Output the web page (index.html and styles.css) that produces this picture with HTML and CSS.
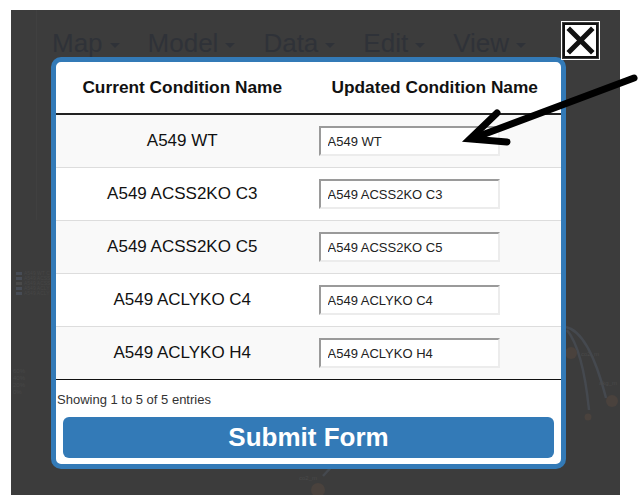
FILE: index.html
```html
<!DOCTYPE html>
<html lang="en">
<head>
<meta charset="utf-8">
<title>Update Condition Names</title>
<link rel="stylesheet" href="styles.css">
</head>
<body>
<div class="page">
  <div class="screen">
    <div class="sideline"></div>
    <nav class="menubar">
      <span class="menu">Map<i class="caret"></i></span>
      <span class="menu">Model<i class="caret"></i></span>
      <span class="menu">Data<i class="caret"></i></span>
      <span class="menu">Edit<i class="caret"></i></span>
      <span class="menu">View<i class="caret"></i></span>
    </nav>
    <div class="canvas">
      <div class="legend">
        <div class="lg"><b class="sw"></b>A549 WT C</div>
        <div class="lg"><b class="sw"></b>A549 ACSS</div>
        <div class="lg"><b class="sw light"></b>A549 ACSS</div>
        <div class="lg"><b class="sw"></b>A549 ACLY</div>
        <div class="lg"><b class="sw"></b>A549 ACLY</div>
      </div>
      <div class="axis">
        <div>60%</div><div>40%</div><div>20%</div><div>0%</div>
      </div>
      <svg class="graph" width="609" height="485" viewBox="0 0 609 485">
        <g stroke="#45494f" stroke-width="2.5" fill="none">
          <path d="M555 317 Q578 322 595 388"/>
          <path d="M556 320 Q572 340 578 400"/>
          <path d="M312 466 L325 452"/>
        </g>
        <g fill="#4a423d">
          <circle cx="560" cy="343" r="6"/>
          <circle cx="601" cy="391" r="6"/>
          <circle cx="577" cy="407" r="3.5"/>
          <circle cx="307" cy="480" r="7"/>
        </g>
        <g fill="#4a4a4a" font-family="Liberation Sans, Arial, sans-serif" font-size="6">
          <text x="570" y="346">co2_m</text>
          <text x="588" y="375">akg_m</text>
          <text x="288" y="470">co2_m</text>
        </g>
      </svg>
    </div>

    <div class="modal">
      <table class="conditions">
        <thead>
          <tr><th>Current Condition Name</th><th>Updated Condition Name</th></tr>
        </thead>
        <tbody>
          <tr><td class="cur">A549 WT</td><td class="upd"><input type="text" value="A549 WT"></td></tr>
          <tr><td class="cur">A549 ACSS2KO C3</td><td class="upd"><input type="text" value="A549 ACSS2KO C3"></td></tr>
          <tr><td class="cur">A549 ACSS2KO C5</td><td class="upd"><input type="text" value="A549 ACSS2KO C5"></td></tr>
          <tr><td class="cur">A549 ACLYKO C4</td><td class="upd"><input type="text" value="A549 ACLYKO C4"></td></tr>
          <tr><td class="cur">A549 ACLYKO H4</td><td class="upd"><input type="text" value="A549 ACLYKO H4"></td></tr>
        </tbody>
      </table>
      <div class="info">Showing 1 to 5 of 5 entries</div>
      <button class="submit" type="button">Submit Form</button>
    </div>

    <button class="close" type="button" aria-label="Close">
      <span class="close-inner">
        <svg width="31" height="31" viewBox="0 0 31 31">
          <path d="M5 5 L26 26 M26 5 L5 26" stroke="#111" stroke-width="5" stroke-linecap="square" fill="none"/>
        </svg>
      </span>
    </button>
  </div>

  <svg class="arrow" width="643" height="501" viewBox="0 0 643 501">
    <line x1="634" y1="78" x2="474" y2="138" stroke="#000" stroke-width="7" stroke-linecap="round"/>
    <polyline points="497,113 470,139 507,142" fill="none" stroke="#000" stroke-width="7" stroke-linecap="round" stroke-linejoin="miter"/>
  </svg>
</div>
</body>
</html>
```

FILE: styles.css
```css
html, body {
  margin: 0;
  padding: 0;
  background: #ffffff;
}

body {
  font-family: "Liberation Sans", Arial, sans-serif;
  color: #222;
}

.page {
  position: relative;
  width: 643px;
  height: 501px;
  padding: 10px 0 0 11px;
  box-sizing: border-box;
  overflow: hidden;
}

.screen {
  position: relative;
  width: 609px;
  height: 485px;
  background: #3c3c3c;
  overflow: hidden;
}

.sideline {
  position: absolute;
  left: 25px;
  top: 0;
  width: 1px;
  height: 210px;
  background: #404040;
}

/* faint menu behind the overlay */
.menubar {
  display: flex;
  align-items: center;
  gap: 28px;
  height: 66px;
  padding-left: 41px;
  font-size: 26px;
  color: #2f3238;
}

.menu {
  display: flex;
  align-items: center;
}

.caret {
  display: inline-block;
  margin-left: 7px;
  margin-top: 4px;
  width: 0;
  height: 0;
  border-top: 5px solid #2f3238;
  border-left: 5px solid transparent;
  border-right: 5px solid transparent;
}

/* faint diagram behind the overlay */
.canvas {
  position: absolute;
  inset: 0;
}

.graph {
  position: absolute;
  left: 0;
  top: 0;
}

.legend {
  position: absolute;
  left: 5px;
  top: 261px;
  display: flex;
  flex-direction: column;
  font-size: 5px;
  line-height: 5px;
  color: #464646;
}

.lg {
  display: flex;
  align-items: center;
  gap: 2px;
}

.sw {
  display: inline-block;
  width: 6px;
  height: 3px;
  background: #474c55;
}

.sw.light {
  background: #4a4a4a;
}

.axis {
  position: absolute;
  left: 2px;
  top: 358px;
  font-size: 6px;
  line-height: 7px;
  color: #474747;
}

/* modal */
.modal {
  position: absolute;
  left: 40px;
  top: 47px;
  width: 515px;
  height: 412px;
  box-sizing: border-box;
  border: 5px solid #337ab7;
  border-radius: 10px;
  background: #ffffff;
  display: flex;
  flex-direction: column;
}

.conditions {
  width: 100%;
  border-collapse: collapse;
  table-layout: fixed;
}

.conditions th {
  width: 50%;
  height: 51px;
  padding: 0;
  font-size: 17.3px;
  font-weight: bold;
  text-align: center;
  color: #111;
  border-bottom: 2px solid #222;
}

.conditions td {
  height: 52px;
  padding: 0;
  border-top: 1px solid #dddddd;
  vertical-align: middle;
}

.conditions tbody tr:first-child td {
  border-top: none;
}

.conditions tbody tr:last-child td {
  border-bottom: 1px solid #111;
}

.conditions tbody tr:nth-child(odd) {
  background: #f9f9f9;
}

.cur {
  text-align: center;
  font-size: 17px;
  color: #111;
}

.upd {
  padding-left: 10px !important;
}

.upd input {
  display: block;
  width: 181px;
  height: 30px;
  box-sizing: border-box;
  margin: 0;
  padding: 0 7px;
  border: 2px solid;
  border-color: #9a9a9a #ececec #ececec #9a9a9a;
  background: #ffffff;
  font-family: "Liberation Sans", Arial, sans-serif;
  font-size: 13px;
  color: #222;
  outline: none;
}

.info {
  margin-top: 12px;
  padding-left: 1px;
  font-size: 13px;
  line-height: 16px;
  color: #333;
}

.submit {
  margin: 9px 7px 0;
  height: 41px;
  border: none;
  border-radius: 6px;
  background: #337ab7;
  color: #ffffff;
  font-family: "Liberation Sans", Arial, sans-serif;
  font-size: 26px;
  font-weight: bold;
  padding: 0;
  cursor: pointer;
}

/* close box */
.close {
  position: absolute;
  left: 550px;
  top: 11px;
  width: 39px;
  height: 39px;
  box-sizing: border-box;
  padding: 1px;
  margin: 0;
  border: 1px solid #ffffff;
  background: #3c3c3c;
  display: flex;
  cursor: pointer;
}

.close-inner {
  flex: 1;
  display: flex;
  align-items: center;
  justify-content: center;
  border: 2px solid #111;
  background: #ffffff;
}

.arrow {
  position: absolute;
  left: 0;
  top: 0;
  pointer-events: none;
}
```
